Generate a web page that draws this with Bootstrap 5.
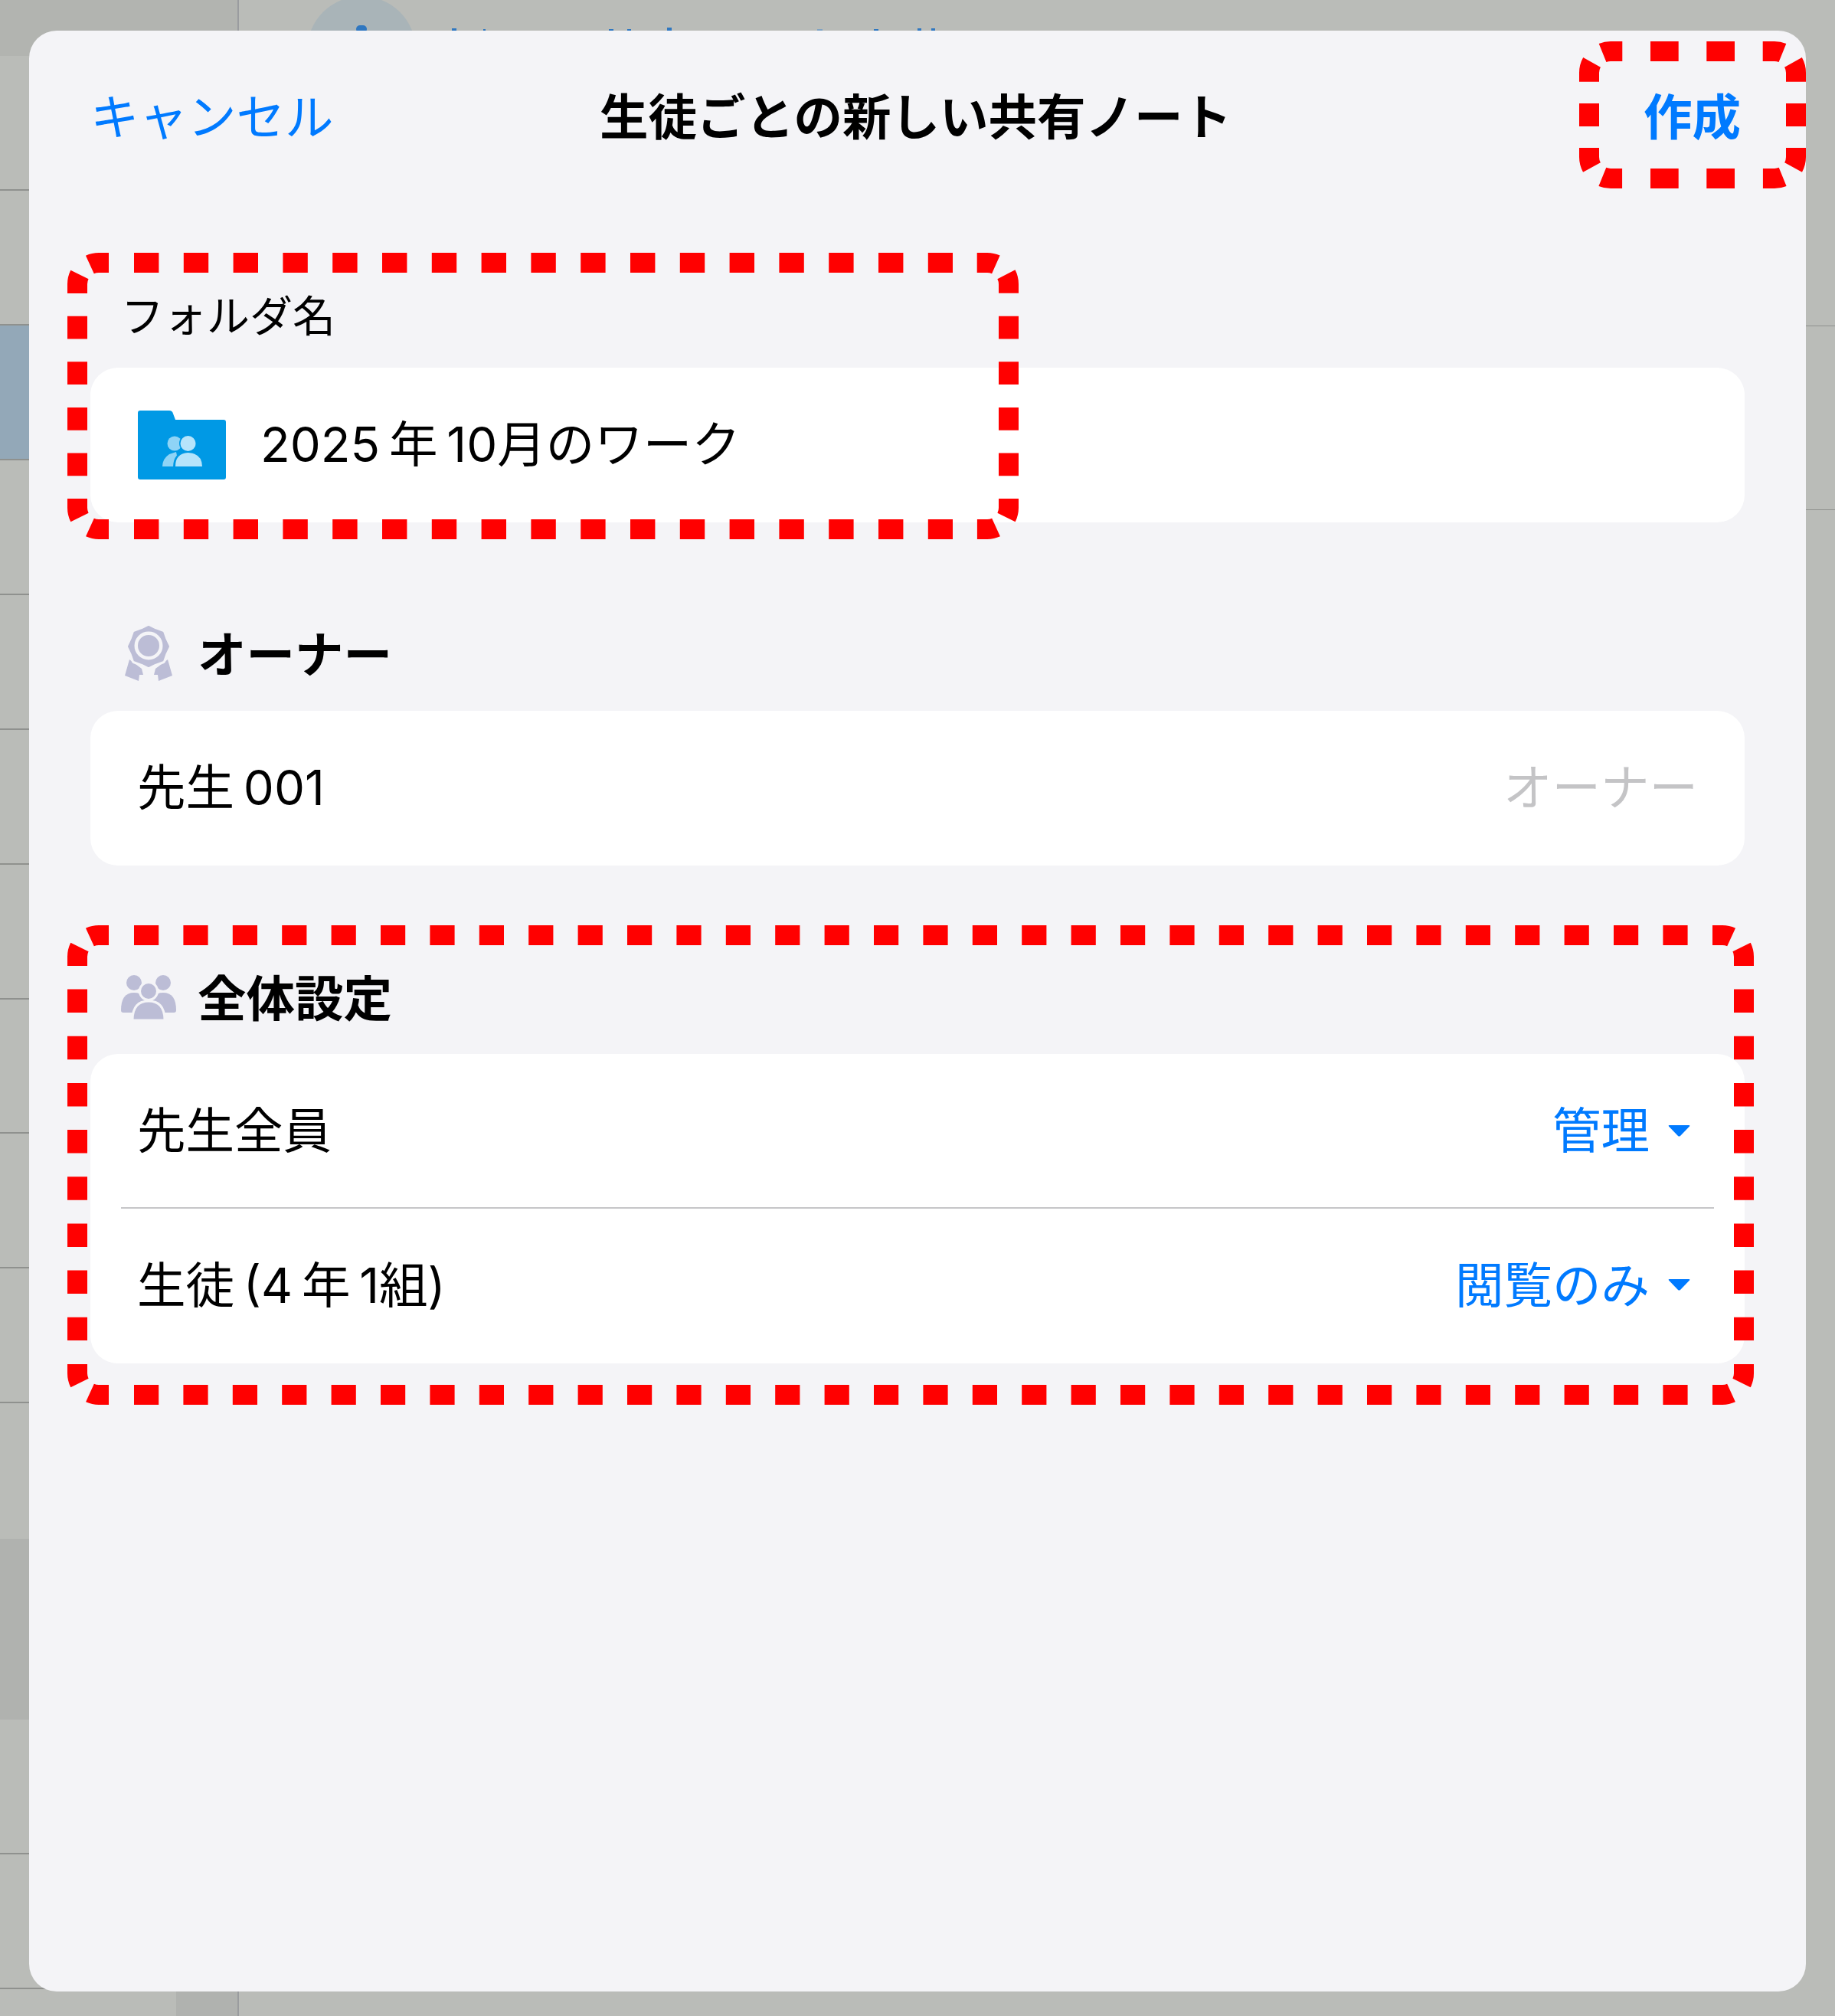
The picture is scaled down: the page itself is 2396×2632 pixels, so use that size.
<!DOCTYPE html>
<html lang="ja">
<head>
  <meta charset="UTF-8">
  <meta name="viewport" content="width=device-width, initial-scale=1">
  <title>生徒ごとの新しい共有ノート</title>
  <link href="https://cdn.jsdelivr.net/npm/bootstrap@5.3.3/dist/css/bootstrap.min.css" rel="stylesheet">
  <style>
    body {
      width: 2396px; height: 2632px; overflow: hidden; position: relative;
      background: #babcb8; color: #000;
      font-family: Inter, "Noto Sans CJK JP", sans-serif;
      font-size: 63.500px; line-height: 80px; word-spacing: -6px;
    }
    /*画面の背景（シートの後ろ） */
    .side-list { width: 312px; height: 2632px; border-right: 2px solid #9a9c9f; }
    .side-head { height: 73px; background: #b2b4b0; }
    .side-row { height: 176px; border-bottom: 2px solid #8f918e; }
    .side-row.picked { background: #93a8b8; }
    .side-row.plain { height: 177px; border-bottom: 0; }
    .side-row.shaded { height: 236px; background: #b0b2af; border-bottom: 0; }
    .side-tail { height: 35px; }
    .side-tail div { width: 80px; background: #b0b2af; }
    .pane-a { height: 426px; border-bottom: 1px solid #8f918e; }
    .pane-b { height: 240px; border-bottom: 1px solid #8f918e; }
    /* シート */
    .sheet {
      position: absolute; left: 38px; top: 40px; width: 2320px; height: 2560px;
      background: #f4f4f7; border-radius: 36px; padding: 0 80px;
    }
    .sheet-nav {
      height: 222px; margin: 0 -80px; padding: 3px 85px 0 80px;
      display: grid; grid-template-columns: 1fr auto 1fr; align-items: center;
    }
    .blue-text { color: #007aff; }
    .nav-done { font-weight: 700; text-align: right; }
    .nav-title { font-weight: 700; }
    .folder-label { font-size: 56px; line-height: 66px; margin: 118px 0 34px 40px; }
    .group-head { height: 80px; font-weight: 700; margin-left: 40px; gap: 28px; }
    .group-head div { padding-top: 4px; }
    .head-mark { width: 72px; flex: none; }
    .group-head.first { margin-top: 131px; margin-bottom: 35px; }
    .group-head.second { margin-top: 132px; margin-bottom: 34px; }
    .white-card { background: #fff; border-radius: 36px; }
    .card-row { height: 202px; padding: 0 71px 3px 61px; }
    .card-row.upper { height: 200px; padding-bottom: 0; }
    .card-row.owner-row { padding-right: 61px; }
    .folder-row { height: 202px; padding: 0 0 3px 62px; gap: 45px; }
    .folder-row svg { margin-top: 3px; }
    .card-rule { height: 2px; margin: 0 40px; background: #c6c6c8; }
    .owner-tag { color: #c4c4c6; }
    .caret-mark { margin-left: 24px; }
    .callouts { position: absolute; left: 0; top: 0; fill: none; stroke: #f00; stroke-width: 26; }
  </style>
</head>
<body>
  <div class="d-flex">
    <div class="side-list flex-shrink-0 d-flex flex-column">
      <div class="side-head"></div>
      <div class="side-row"></div>
      <div class="side-row"></div>
      <div class="side-row picked"></div>
      <div class="side-row"></div>
      <div class="side-row"></div>
      <div class="side-row"></div>
      <div class="side-row"></div>
      <div class="side-row"></div>
      <div class="side-row"></div>
      <div class="side-row"></div>
      <div class="side-row plain"></div>
      <div class="side-row shaded"></div>
      <div class="side-row"></div>
      <div class="side-row"></div>
      <div class="side-tail d-flex justify-content-end"><div></div></div>
    </div>
    <div class="flex-grow-1">
      <div class="pane-a">
        <svg width="1100" height="44" class="d-block">
          <circle cx="160" cy="66" r="71" fill="#a9b4b8"/>
          <rect x="153" y="33" width="14" height="10" rx="5" fill="#2f77c0"/>
          <g fill="#2f77c0">
            <rect x="278" y="37" width="6" height="4"/>
            <rect x="319" y="38" width="3" height="3"/>
            <rect x="483" y="38" width="6" height="3"/>
            <rect x="507" y="38" width="5" height="3"/>
            <rect x="559" y="36" width="6" height="5"/>
            <rect x="829" y="38" width="6" height="3"/>
            <rect x="886" y="37" width="5" height="4"/>
            <rect x="904" y="37" width="5" height="4"/>
          </g>
          <rect x="755" y="38" width="7" height="3" fill="#7fa3c4"/>
        </svg>
      </div>
      <div class="pane-b"></div>
    </div>
  </div>

  <div class="sheet">
    <div class="sheet-nav">
      <div class="blue-text">キャンセル</div>
      <div class="nav-title">生徒ごとの新しい共有ノート</div>
      <div class="blue-text nav-done">作成</div>
    </div>

    <div class="folder-label">フォルダ名</div>
    <div class="white-card folder-row d-flex align-items-center">
      <svg width="115" height="90" viewBox="0 0 115 90" class="flex-shrink-0">
        <path d="M3 0H41Q45 0 46 4L49 12H112Q115 12 115 15V87Q115 90 112 90H3Q0 90 0 87V3Q0 0 3 0Z" fill="#0099e5"/>
        <circle cx="48" cy="43" r="9.5" fill="#8fd4f6"/>
        <path d="M32 73Q32 63 41 57L50 54L54 73Z" fill="#8fd4f6"/>
        <circle cx="65.500" cy="43" r="11.500" fill="#0099e5"/>
        <path d="M46 74Q46 54 65.500 53Q88 54 88 74Z" fill="#0099e5"/>
        <circle cx="65.500" cy="43" r="10" fill="#b6e4fb"/>
        <path d="M49 73Q49 56 65.500 55Q84 56 84 73Z" fill="#b6e4fb"/>
      </svg>
      <div>2025 年 10月のワーク</div>
    </div>

    <div class="group-head first d-flex align-items-center">
      <svg class="head-mark" width="72" height="73" viewBox="-5 0 72 73">
        <g fill="#bcbdd6">
          <path d="M6 44L22 56L24 64L19 64L18 72L0 65Z"/>
          <path d="M56 44L40 56L38 64L43 64L44 72L62 65Z"/>
          <path stroke="#f4f4f7" stroke-width="8" stroke-linejoin="round" d="M31 1L40 5.300L49.400 8.600L52.700 18L57 27L52.700 36L49.400 45.400L40 48.700L31 53L22 48.700L12.600 45.400L9.300 36L5 27L9.300 18L12.600 8.600L22 5.300Z"/>
          <path stroke="#bcbdd6" stroke-width="2" stroke-linejoin="round" d="M31 1L40 5.300L49.400 8.600L52.700 18L57 27L52.700 36L49.400 45.400L40 48.700L31 53L22 48.700L12.600 45.400L9.300 36L5 27L9.300 18L12.600 8.600L22 5.300Z"/>
        </g>
        <circle cx="31" cy="26" r="16.250" fill="#bcbdd6" stroke="#f4f4f7" stroke-width="4.500"/>
      </svg>
      <div>オーナー</div>
    </div>
    <div class="white-card card-row owner-row d-flex align-items-center justify-content-between">
      <div>先生 001</div>
      <div class="owner-tag">オーナー</div>
    </div>

    <div class="group-head second d-flex align-items-center">
      <svg class="head-mark" width="72" height="58" viewBox="0 0 72 58">
        <g fill="#bcbdd6">
          <circle cx="17" cy="10" r="10"/>
          <circle cx="55" cy="10" r="10"/>
          <path d="M0 46Q0 23 17 23Q34 23 34 46Q34 49 31 49H3Q0 49 0 46Z"/>
          <path d="M38 46Q38 23 55 23Q72 23 72 46Q72 49 69 49H41Q38 49 38 46Z"/>
          <circle cx="36" cy="21" r="11.500" stroke="#f4f4f7" stroke-width="3"/>
          <path d="M15 59Q15 34 36 34Q57 34 57 59Z" stroke="#f4f4f7" stroke-width="3"/>
        </g>
      </svg>
      <div>全体設定</div>
    </div>
    <div class="white-card">
      <div class="card-row upper d-flex align-items-center justify-content-between">
        <div>先生全員</div>
        <div class="blue-text d-flex align-items-center">管理
          <svg class="caret-mark" width="29" height="15" viewBox="0 0 29 15"><path d="M1.500 0H27.500Q29 0 28 1.500L16 14Q14.500 15 13 14L1 1.500Q0 0 1.500 0Z" fill="#007aff"/></svg>
        </div>
      </div>
      <div class="card-rule"></div>
      <div class="card-row d-flex align-items-center justify-content-between">
        <div>生徒 (4 年 1組)</div>
        <div class="blue-text d-flex align-items-center">閲覧のみ
          <svg class="caret-mark" width="29" height="15" viewBox="0 0 29 15"><path d="M1.500 0H27.500Q29 0 28 1.500L16 14Q14.500 15 13 14L1 1.500Q0 0 1.500 0Z" fill="#007aff"/></svg>
        </div>
      </div>
    </div>
  </div>

  <!-- 赤い点線の注記 -->
  <svg class="callouts" width="2396" height="2632">
    <!-- フォルダ名 -->
    <g stroke-dasharray="32.4 32.4">
      <path d="M175 343H1244"/>
      <path d="M175 691H1244"/>
    </g>
    <g stroke-dasharray="29.8 29.8">
      <path d="M101 412.700V622"/>
      <path d="M1317 412.700V622"/>
    </g>
    <g stroke-dasharray="25 19 25">
      <path d="M142 343H129A28 28 0 0 0 101 371V383"/>
      <path d="M1275.700 343H1289A28 28 0 0 1 1317 371V383"/>
      <path d="M1317 651V663A28 28 0 0 1 1289 691H1275.700"/>
      <path d="M101 651V663A28 28 0 0 0 129 691H142"/>
    </g>
    <!-- 作成 -->
    <g stroke-dasharray="36.700 36.600">
      <path d="M2155 67H2265"/>
      <path d="M2155 233H2265"/>
    </g>
    <path d="M2075 135V165"/>
    <path d="M2345 135V165"/>
    <g stroke-dasharray="26 19 26">
      <path d="M2118.300 67H2103A28 28 0 0 0 2075 95V106.700"/>
      <path d="M2301.700 67H2317A28 28 0 0 1 2345 95V106.700"/>
      <path d="M2345 193V205A28 28 0 0 1 2317 233H2301.700"/>
      <path d="M2075 193V205A28 28 0 0 0 2103 233H2118.300"/>
    </g>
    <!-- 全体設定 -->
    <g stroke-dasharray="32.2 32.2">
      <path d="M175 1221H2204"/>
      <path d="M175 1821H2204"/>
    </g>
    <g stroke-dasharray="30.500 30.660">
      <path d="M101 1291.600V1750"/>
      <path d="M2277 1291.600V1750"/>
    </g>
    <g stroke-dasharray="25 19 25">
      <path d="M142 1221H129A28 28 0 0 0 101 1249V1261"/>
      <path d="M2236 1221H2249A28 28 0 0 1 2277 1249V1261"/>
      <path d="M2277 1781V1793A28 28 0 0 1 2249 1821H2236"/>
      <path d="M101 1781V1793A28 28 0 0 0 129 1821H142"/>
    </g>
  </svg>

  <script src="https://cdn.jsdelivr.net/npm/bootstrap@5.3.3/dist/js/bootstrap.bundle.min.js"></script>
</body>
</html>
